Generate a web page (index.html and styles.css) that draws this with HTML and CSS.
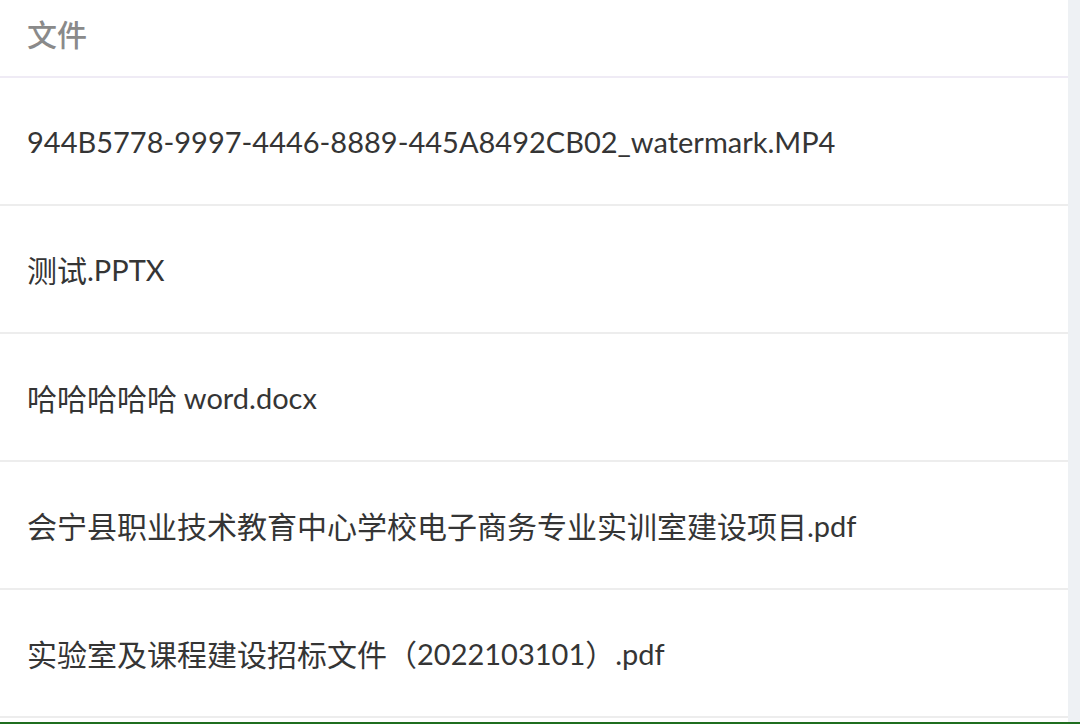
FILE: index.html
```html
<!DOCTYPE html>
<html lang="zh-CN">
<head>
<meta charset="utf-8">
<link rel="stylesheet" href="styles.css">
</head>
<body>
<div class="page">
  <div class="main">
    <div class="header"><span class="cjk">文件</span></div>
    <ul class="list">
      <li class="row">944B5778-9997-4446-8889-445A8492CB02_watermark.MP4</li>
      <li class="row"><span class="cjk">测试</span>.PPTX</li>
      <li class="row"><span class="cjk">哈哈哈哈哈</span> word.docx</li>
      <li class="row"><span class="cjk">会宁县职业技术教育中心学校电子商务专业实训室建设项目</span>.pdf</li>
      <li class="row"><span class="cjk">实验室及课程建设招标文件（</span>2022103101<span class="cjk">）</span>.pdf</li>
    </ul>
  </div>
  <div class="gutter"></div>
</div>
<div class="bottombar"></div>
</body>
</html>
```

FILE: styles.css
```css
html, body {
  margin: 0;
  padding: 0;
  background: #ffffff;
  overflow: hidden;
}
body {
  width: 1080px;
  height: 724px;
  font-family: "Lato", "Noto Sans CJK SC", sans-serif;
  display: flex;
  flex-direction: column;
}
.page {
  display: flex;
  flex: 1;
  min-height: 0;
}
.main {
  width: 1068px;
  display: flex;
  flex-direction: column;
}
.gutter {
  flex: 1;
  background: #eef1f4;
}
.header {
  border-bottom: 2px solid #efebf5;
  display: flex;
  align-items: center;
  padding-left: 27px;
  padding-bottom: 10px;
  height: 66px;
  font-size: 29px;
  font-weight: 500;
  color: #8a8a8a;
}
.list {
  list-style: none;
  margin: 0;
  padding: 0;
}
.row {
  height: 126px;
  border-bottom: 2px solid #ededed;
  display: flex;
  align-items: center;
  padding-left: 27px;
  font-size: 29px;
  color: #353535;
  white-space: pre;
}
.cjk {
  font-family: "Noto Sans CJK SC", sans-serif;
  font-size: 30px;
}
.bottombar {
  height: 2px;
  background: #1f6e1f;
}
```
